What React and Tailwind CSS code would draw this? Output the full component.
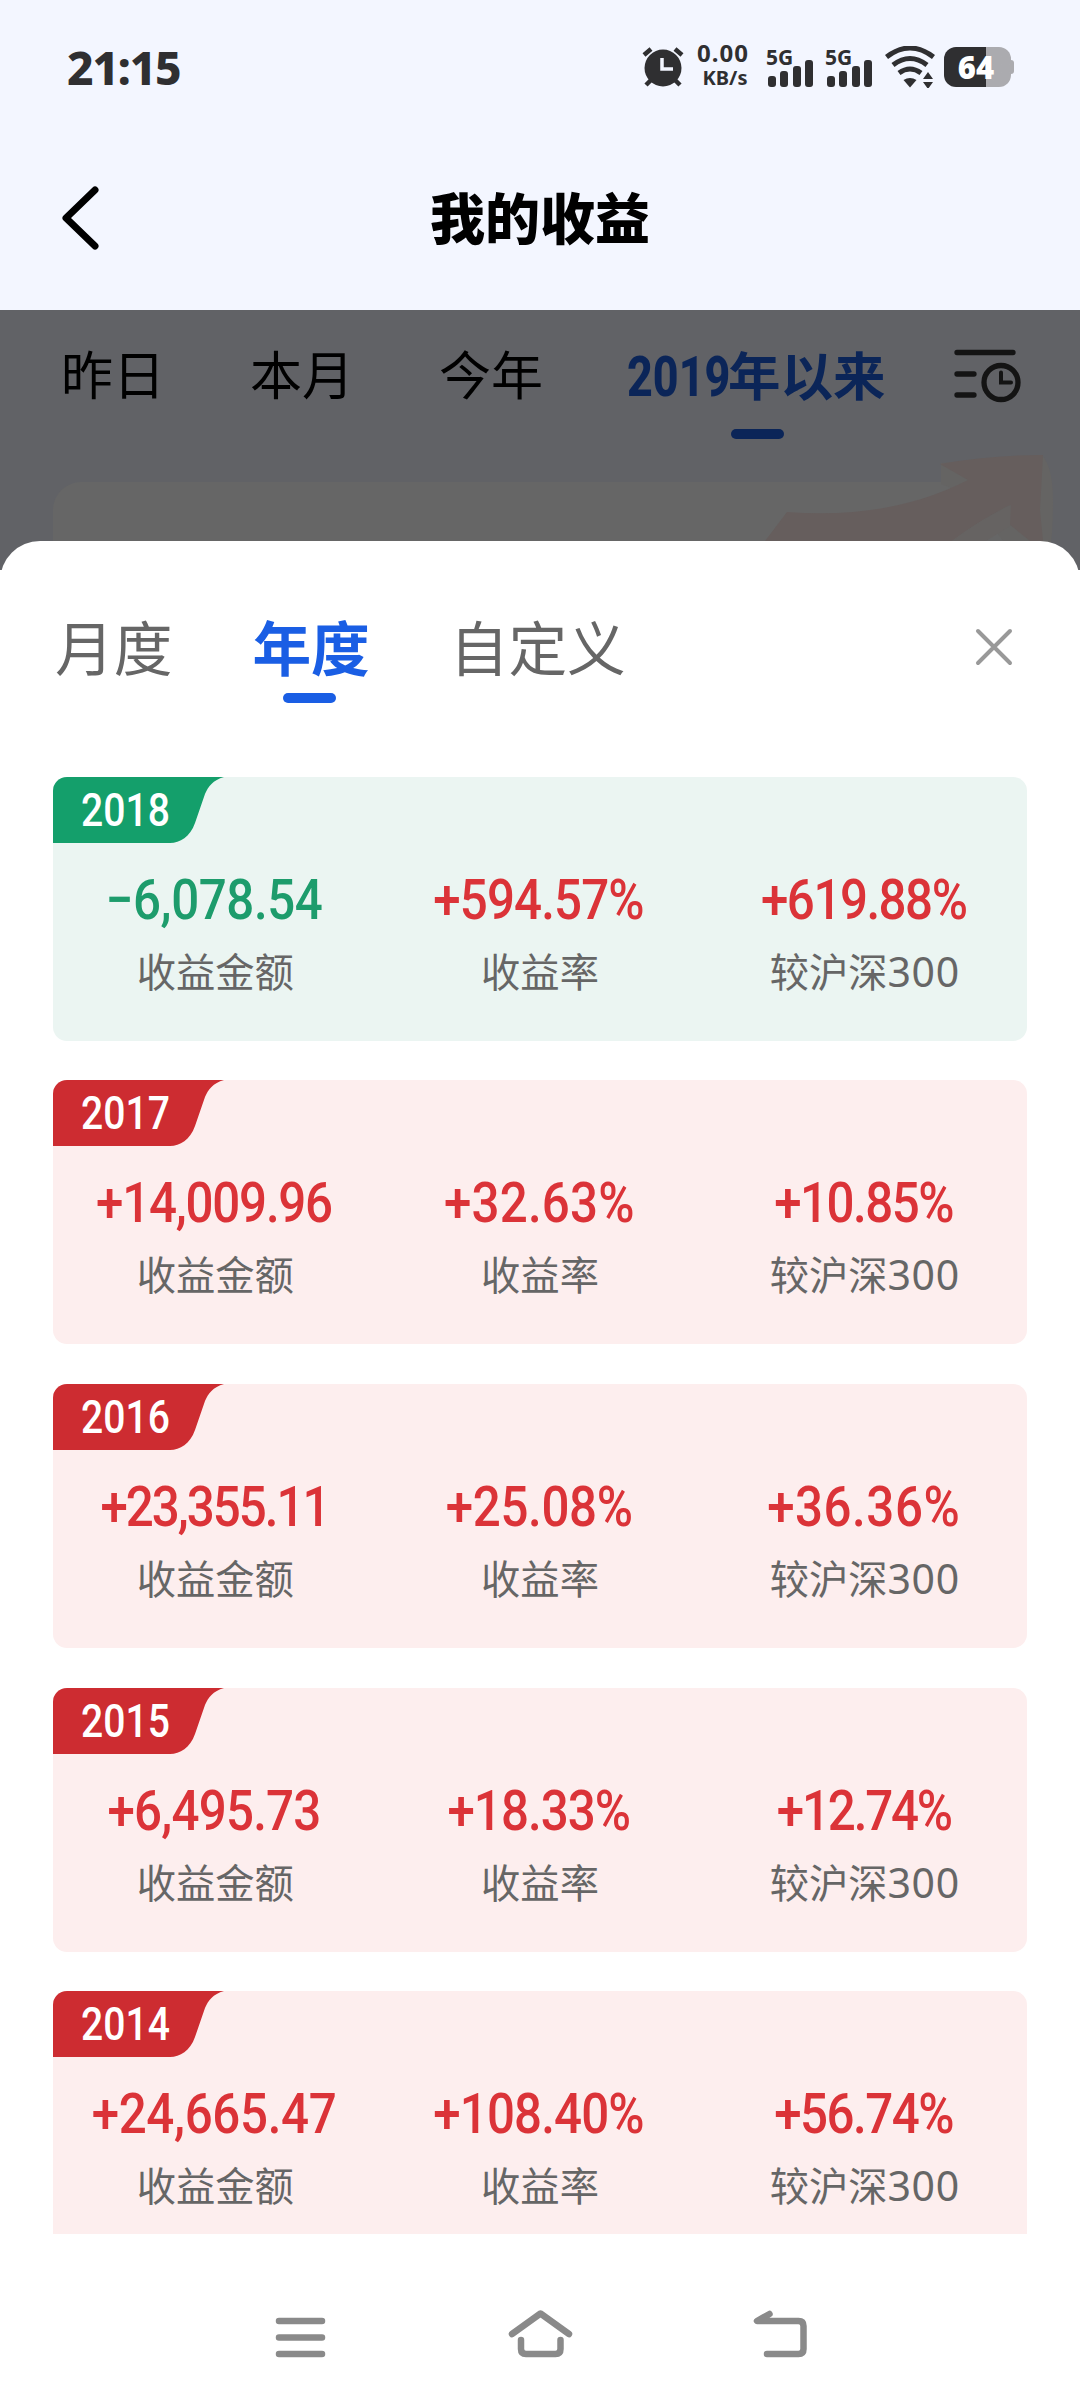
const CJK = 'font-["Noto_Sans_CJK_SC",sans-serif]';

const years = [
  {
    year: '2018',
    loss: true,
    amount: { text: '−6,078.54', tracking: 'tracking-[-0.5px]' },
    rate: { text: '+594.57%', tracking: 'tracking-[-1px]' },
    versus: { text: '+619.88%', tracking: 'tracking-[-1.7px]' },
  },
  {
    year: '2017',
    amount: { text: '+14,009.96', tracking: 'tracking-[-1.4px]' },
    rate: { text: '+32.63%', tracking: 'tracking-[0.2px]' },
    versus: { text: '+10.85%', tracking: 'tracking-[-1.7px]' },
  },
  {
    year: '2016',
    amount: { text: '+23,355.11', tracking: 'tracking-[-2.3px]' },
    rate: { text: '+25.08%', tracking: 'tracking-[-0.4px]' },
    versus: { text: '+36.36%', tracking: 'tracking-[0.6px]' },
  },
  {
    year: '2015',
    amount: { text: '+6,495.73', tracking: 'tracking-[-0.9px]' },
    rate: { text: '+18.33%', tracking: 'tracking-[-1.1px]' },
    versus: { text: '+12.74%', tracking: 'tracking-[-2.5px]' },
  },
  {
    year: '2014',
    amount: { text: '+24,665.47', tracking: 'tracking-[-0.4px]' },
    rate: { text: '+108.40%', tracking: 'tracking-[-1px]' },
    versus: { text: '+56.74%', tracking: 'tracking-[-1.7px]' },
  },
];

function Signal() {
  return (
    <div className="relative h-[42px] w-12">
      <span className='absolute top-0 left-0 font-["Noto_Sans",sans-serif] text-[21px] leading-[22px] font-bold'>5G</span>
      <svg width="48" height="42" viewBox="0 0 48 42" fill="#2f2f31">
        <rect x="2" y="30" width="8" height="11" rx="3" />
        <rect x="14" y="25" width="8" height="16" rx="3" />
        <rect x="27" y="20" width="8" height="21" rx="3" />
        <rect x="39" y="14" width="8" height="27" rx="3" />
      </svg>
    </div>
  );
}

function StatusBar() {
  return (
    <div className="flex h-[134px] items-center pl-[67px] pr-[66px] text-[#2f2f31]">
      <span className='font-["Noto_Sans",sans-serif] text-[46px] leading-none font-extrabold tracking-[-1.2px]'>21:15</span>
      <div className="ml-auto flex items-center">
        <svg width="42" height="42" viewBox="0 0 42 42" fill="none" stroke="#2f2f31">
          <path d="M2 9 9 3M40 9 33 3" strokeWidth="4.5" />
          <path d="M9 34 4 39M33 34 38 39" strokeWidth="4.5" />
          <circle cx="21" cy="22" r="18.5" fill="#2f2f31" stroke="none" />
          <path d="M20 12v11h11" stroke="#f3f6ff" strokeWidth="3.5" />
        </svg>
        <div className='ml-3 flex w-[54px] flex-col items-center font-["Noto_Sans",sans-serif] font-bold'>
          <span className="-mt-1 text-[24px] leading-[26px] tracking-[1px]">0.00</span>
          <span className="ml-1 text-[20px] leading-[24px]">KB/s</span>
        </div>
        <div className="ml-4 flex gap-[11px]">
          <Signal />
          <Signal />
        </div>
        <svg className="ml-3" width="50" height="42" viewBox="0 0 50 42" fill="none" stroke="#2f2f31" strokeWidth="5">
          <path d="M1.5 11Q25-7 48.500 11M8 19Q25 6 42 19M14 27Q25 19 36 27" />
          <path d="M18.500 34Q25 30 31.500 34L25 41.500Z" fill="#2f2f31" stroke="none" />
          <path d="M38 33h10l-5-7zM38 36h10l-5 7z" fill="#2f2f31" stroke="none" />
        </svg>
        <div className="ml-[9px] flex items-center">
          <div className='flex h-10 w-[67px] items-center justify-center rounded-xl bg-linear-to-r from-[#2f2f31] from-63% to-[#ababaf] to-63% pr-[3px] font-["Open_Sans",sans-serif] text-[31px] font-extrabold text-white'>
            64
          </div>
          <div className="h-3.5 w-[3px] rounded-r bg-[#ababaf]" />
        </div>
      </div>
    </div>
  );
}

function PeriodIcon() {
  return (
    <svg width="68" height="54" viewBox="0 0 68 54" fill="none" stroke="#141414" strokeWidth="5.300" strokeLinecap="round">
      <path d="M3 3.500h56M3 25h17M3 46h17" />
      <circle cx="47" cy="33.500" r="17" />
      <path d="M47 23.500v10h10" strokeWidth="4" />
    </svg>
  );
}

function Backdrop() {
  return (
    <div className="relative h-[260px] bg-[#616266]">
      <div className="flex h-[128px] items-center pl-[61px] text-[52px] leading-[72px] text-black">
        <span className="w-[189px] pb-0.5">昨日</span>
        <span className="w-[189px] pb-0.5">本月</span>
        <span className="w-[188px] pb-0.5">今年</span>
        <div className="flex flex-1 items-center font-bold whitespace-nowrap text-[#0b2558]">
          <span className="w-[101px] pt-0.5">
            <span className='inline-block origin-left scale-x-80 font-["Roboto",sans-serif] text-[56px] font-extrabold'>2019</span>
          </span>
          <span className="pb-0.5 text-[52.500px]">年以来</span>
        </div>
        <div className="mt-1 mr-[58px]">
          <PeriodIcon />
        </div>
      </div>
      <div className="absolute top-[119px] left-[731px] h-2.5 w-[53px] rounded-full bg-[#0b2558]" />
      <div className="mx-[53px] mt-11 h-[88px] rounded-t-[28px] bg-[#666666]" />
      <svg className="absolute top-[140px] left-[760px]" width="300" height="100" viewBox="0 0 300 100">
        <path d="M181 13 282 5Q293 18 293 50T290 100H250L207 44 181 34Z" fill="#656463" />
        <path d="M5 91 27 62Q130 70 208 30L180 14Q230 5 283 5L280 60 283 91H270L244 70 250 55Q220 70 192 91Z" fill="#665e5d" />
        <path d="M192 91Q220 70 251 55L250 76 226 91Z" fill="#666362" />
      </svg>
    </div>
  );
}

function Metric({ value, label, digits, color }) {
  return (
    <div className="flex flex-1 flex-col items-center">
      <span className={`mr-0.5 scale-x-88 font-["Roboto",sans-serif] text-[56px] leading-[56px] font-medium whitespace-nowrap ${value.tracking} ${color}`}>{value.text}</span>
      <span className="mt-[15px] text-[39.300px] leading-[53px] whitespace-nowrap text-[#666666]">
        {label}
        {digits && <span className='font-["Noto_Sans",sans-serif] text-[41px] tracking-[0.6px]'>{digits}</span>}
      </span>
    </div>
  );
}

function YearCard({ item }) {
  const red = 'text-[#db3338]';
  return (
    <div className={`h-[264px] shrink-0 overflow-hidden rounded-[14px] ${item.loss ? 'bg-[#ebf5f2]' : 'bg-[#fdeeee]'}`}>
      <div className="relative h-[66px] w-[171px]">
        <svg className={item.loss ? 'text-[#149f6b]' : 'text-[#cd2c31]'} width="171" height="66" viewBox="0 0 171 66" fill="currentColor">
          <path d="M0 0H171C160 3 155 10 152 17L142 46C137 60 127 66 117 66H0Z" />
        </svg>
        <span className='absolute top-[6px] left-7 origin-left scale-x-85 font-["Roboto",sans-serif] text-[46px] leading-[54px] font-medium text-white'>{item.year}</span>
      </div>
      <div className="mt-[29px] flex">
        <Metric value={item.amount} label="收益金额" color={item.loss ? 'text-[#1d9c6c]' : red} />
        <Metric value={item.rate} label="收益率" color={red} />
        <Metric value={item.versus} label="较沪深" digits="300" color={red} />
      </div>
    </div>
  );
}

function NavBar() {
  return (
    <div className="flex h-[166px] items-center justify-center gap-[170px] pt-10">
      <svg width="70" height="54" viewBox="0 0 70 54" fill="none" stroke="#8a8a8a" strokeWidth="6.500" strokeLinecap="round">
        <path d="M14 11h43M14 27.500h43M14 44h43" />
      </svg>
      <svg width="70" height="54" viewBox="0 0 70 54" fill="none" stroke="#8a8a8a" strokeWidth="6.500" strokeLinecap="round" strokeLinejoin="round">
        <path d="M7 24 35.500 3.500 64 24M16 30v9q0 5 5 5h29.500q5 0 5-5v-9" />
      </svg>
      <svg width="70" height="54" viewBox="0 0 70 54" fill="none" stroke="#8a8a8a" strokeWidth="6.500" strokeLinecap="round" strokeLinejoin="round">
        <path d="M24.500 4 12 11H53.500q5 0 5 5v23q0 5-5 5H22" />
      </svg>
    </div>
  );
}

export default function App() {
  return (
    <div className={`h-[2400px] w-[1080px] overflow-hidden bg-white ${CJK}`}>
      <div className="h-[310px] bg-[#f3f6ff]">
        <StatusBar />
        <div className="flex h-[168px] items-center justify-center">
          <svg className="mr-auto ml-[60px]" width="40" height="66" viewBox="0 0 40 66" fill="none" stroke="#000" strokeWidth="7" strokeLinecap="round" strokeLinejoin="round">
            <path d="M35 5 6 33 35 61" />
          </svg>
          <h1 className="mb-1.5 text-[55px] font-extrabold text-black">我的收益</h1>
          <div className="mr-[60px] ml-auto w-10" />
        </div>
      </div>

      <Backdrop />

      <div className="relative -mt-[29px] flex h-[1859px] flex-col rounded-t-[40px] bg-white">
        <div className="flex h-[235.900px] shrink-0 items-start gap-[80px] pt-[76px] pr-[66px] pl-[55px] text-[58.700px] leading-[58px] text-[#666666]">
          <span>月度</span>
          <div className="relative font-bold text-[#1a5ee4]">
            年度
            <div className="absolute top-[76px] left-[31px] h-2.5 w-[53px] rounded-full bg-[#1a5ee4]" />
          </div>
          <span>自定义</span>
          <svg className="mt-2.5 ml-auto" width="40" height="40" viewBox="0 0 40 40" fill="none" stroke="#999" strokeWidth="4" strokeLinecap="round">
            <path d="M4 4 36 36M36 4 4 36" />
          </svg>
        </div>
        <div className="flex h-[1457px] flex-col gap-[39.550px] overflow-hidden px-[53px]">
          {years.map((item) => (
            <YearCard key={item.year} item={item} />
          ))}
        </div>
        <NavBar />
      </div>
    </div>
  );
}
